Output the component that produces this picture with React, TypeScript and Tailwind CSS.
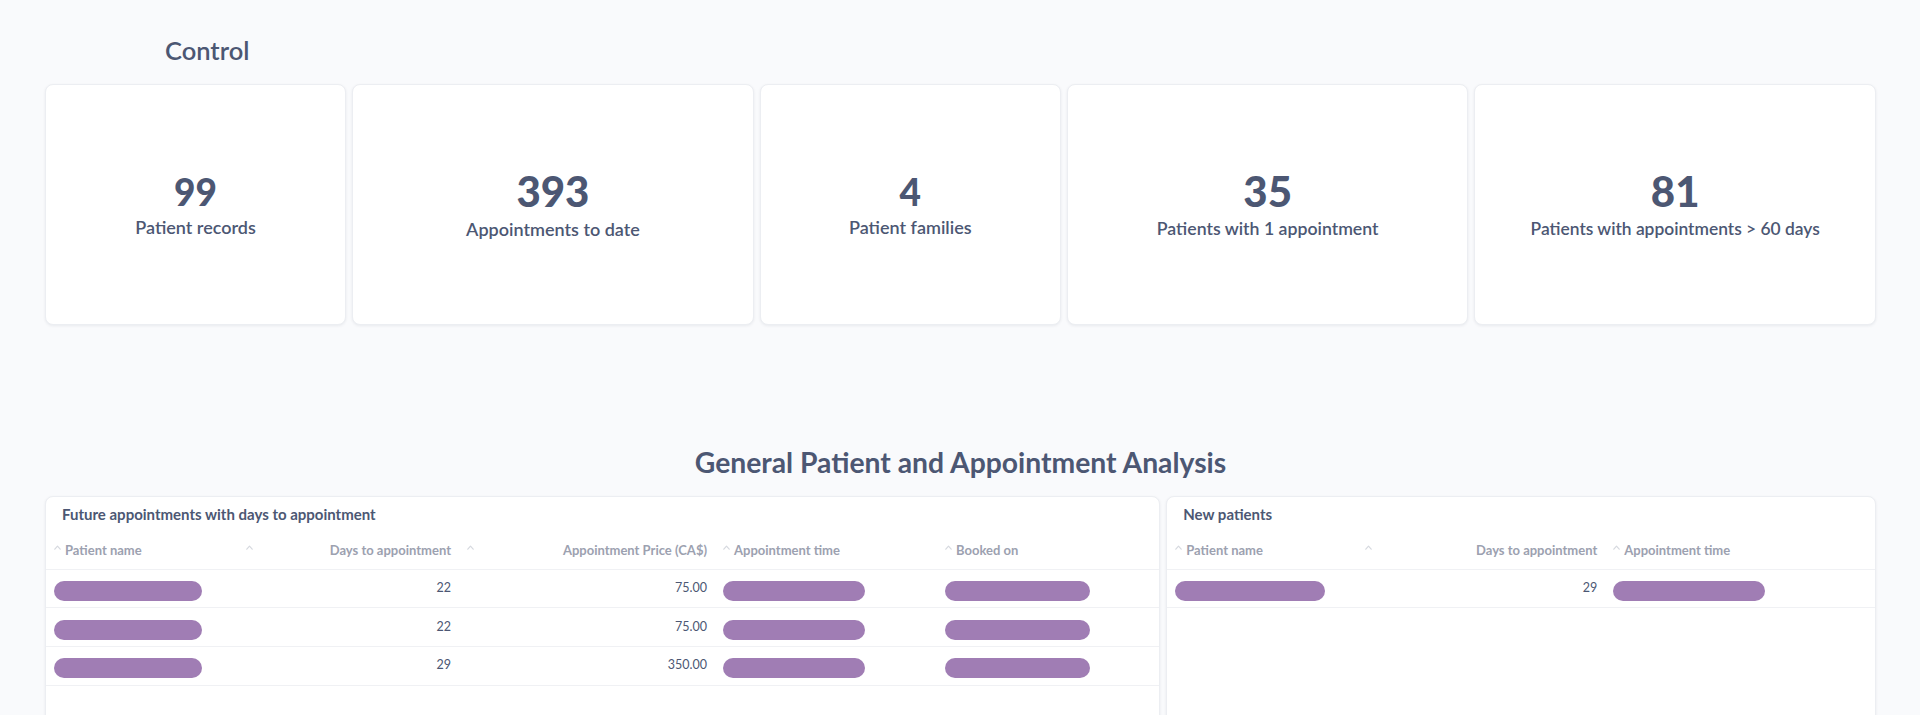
import React from "react";

const FONT = "font-['Lato','Noto_Sans',sans-serif]";

function Caret() {
  return (
    <svg width="7" height="5" viewBox="0 0 7 5" className="shrink-0 mb-[6px]">
      <path d="M0.8 4.2 L3.5 1.2 L6.2 4.2" fill="none" stroke="#d6d9df" strokeWidth="1.2" strokeLinecap="round" strokeLinejoin="round" />
    </svg>
  );
}

function Pill({ w }: { w: number }) {
  return <div className="h-[20px] rounded-full bg-[#a07db4] mt-[5px]" style={{ width: w }} />;
}

type Col = { label: string; right?: boolean };

function Scalar({ value, label, big, labelClass }: { value: string; label: string; big?: boolean; labelClass: string }) {
  return (
    <div className="bg-white border border-[#eceef2] rounded-[8px] shadow-[0_1px_3px_rgba(20,30,50,0.07)] flex flex-col items-center justify-center">
      <div className={`${big ? "text-[42px]" : "text-[37px]"} leading-none font-black text-[#4c5773]`}>{value}</div>
      <div className={`mt-2 ${labelClass} leading-none font-semibold text-[#4c5773]`}>{label}</div>
    </div>
  );
}

function HeaderCell({ col }: { col: Col }) {
  if (col.right) {
    return (
      <div className="flex items-center justify-between px-2">
        <Caret />
        <span>{col.label}</span>
      </div>
    );
  }
  return (
    <div className="flex items-center gap-[4px] px-2">
      <Caret />
      <span>{col.label}</span>
    </div>
  );
}

function TableCard({
  title,
  cols,
  template,
  rows,
}: {
  title: string;
  cols: Col[];
  template: string;
  rows: (string | number)[][];
}) {
  return (
    <div className="bg-white border border-[#eceef2] rounded-[8px] shadow-[0_1px_3px_rgba(20,30,50,0.07)] h-[300px] overflow-hidden">
      <div className="h-[36px] pt-[7px] pl-[16px] text-[15px] leading-[20px] font-bold text-[#4c5773]">{title}</div>
      <div className={`grid ${template} h-[37px] border-b border-[#f0f1f4] text-[13px] font-bold text-[#9ca1b0]`}>
        {cols.map((c, i) => (
          <HeaderCell key={i} col={c} />
        ))}
      </div>
      {rows.map((r, ri) => (
        <div key={ri} className={`grid ${template} h-[38.6px] border-b border-[#f0f1f4] text-[12.5px] text-[#4c5773]`}>
          {r.map((v, ci) => (
            <div key={ci} className={`flex items-center px-2 ${cols[ci].right ? "justify-end" : ""}`}>
              {typeof v === "number" ? <Pill w={v} /> : <span>{v}</span>}
            </div>
          ))}
        </div>
      ))}
    </div>
  );
}

export default function App() {
  const cols1: Col[] = [
    { label: "Patient name" },
    { label: "Days to appointment", right: true },
    { label: "Appointment Price (CA$)", right: true },
    { label: "Appointment time" },
    { label: "Booked on" },
  ];
  const cols2: Col[] = [
    { label: "Patient name" },
    { label: "Days to appointment", right: true },
    { label: "Appointment time" },
  ];
  return (
    <div className={`${FONT} bg-[#f9fafc] h-[715px] overflow-hidden pl-[45px] pr-[44px]`}>
      <div className="pt-[38px] pl-[120px] text-[25.5px] leading-none font-semibold text-[#4c5773]">Control</div>
      <div className="mt-[20px] grid grid-cols-[3fr_4fr_3fr_4fr_4fr] gap-[6px] h-[241px]">
        <Scalar value="99" label="Patient records" labelClass="text-[18px]" />
        <Scalar value="393" label="Appointments to date" big labelClass="text-[18px]" />
        <Scalar value="4" label="Patient families" labelClass="text-[18px]" />
        <Scalar value="35" label="Patients with 1 appointment" big labelClass="text-[17.7px]" />
        <Scalar value="81" label="Patients with appointments > 60 days" big labelClass="text-[17.4px]" />
      </div>
      <div className="mt-[123px] text-center text-[28.3px] leading-none font-bold text-[#4c5773]">
        General Patient and Appointment Analysis
      </div>
      <div className="mt-[20px] grid grid-cols-[11fr_7fr] gap-[6px]">
        <TableCard
          title="Future appointments with days to appointment"
          cols={cols1}
          template="grid-cols-[192px_221px_256px_222px_1fr]"
          rows={[
            [148, "22", "75.00", 142, 145],
            [148, "22", "75.00", 142, 145],
            [148, "29", "350.00", 142, 145],
          ]}
        />
        <TableCard
          title="New patients"
          cols={cols2}
          template="grid-cols-[190px_248px_1fr]"
          rows={[[150, "29", 152]]}
        />
      </div>
    </div>
  );
}
